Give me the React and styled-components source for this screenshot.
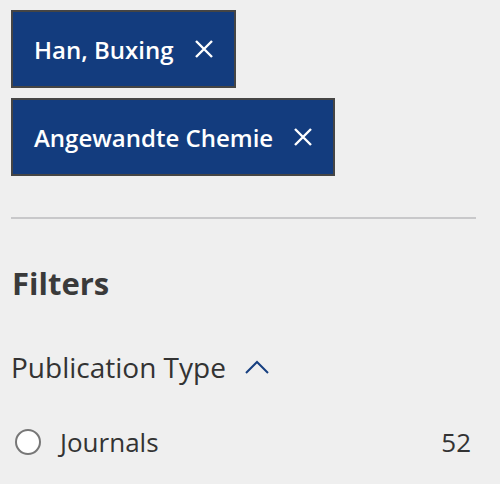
import React from 'react';
import styled, {createGlobalStyle} from "styled-components";

const GlobalStyle = createGlobalStyle`
  html, body {
    margin: 0;
    padding: 0;
    background: #efefef;
    font-family: "Open Sans", "Liberation Sans", sans-serif;
    color: #333;
  }
`

const Page = styled.div`
  width: 500px;
  height: 484px;
  box-sizing: border-box;
  padding: 10px 24px 0 11px;
  overflow: hidden;
`

const ChipList = styled.div`
  display: flex;
  flex-direction: column;
  align-items: flex-start;
  gap: 10px;
`

const Chip = styled.button`
  display: flex;
  align-items: center;
  gap: 20px;
  height: 78px;
  box-sizing: border-box;
  padding: 0 20px 0 21px;
  background: #133c7e;
  border: 2px solid #454545;
  color: #fff;
  font-family: inherit;
  font-size: 24px;
  font-weight: 600;
  cursor: pointer;
`

const Divider = styled.hr`
  margin: 41px 0 0;
  border: none;
  border-top: 2px solid #c8c8ca;
`

const Heading = styled.h2`
  margin: 44px 0 0 1px;
  font-size: 31px;
  font-weight: 700;
  line-height: 40px;
  color: #3a3a3a;
`

const SectionToggle = styled.div`
  display: flex;
  align-items: center;
  gap: 19px;
  margin-top: 45px;
  font-size: 28px;
  line-height: 38px;
  color: #333;
`

const OptionRow = styled.label`
  display: flex;
  align-items: center;
  margin-top: 39px;
  padding: 0 5px 0 4px;
  font-size: 26px;
  line-height: 34px;
  color: #333;
`

const Radio = styled.span`
  width: 26px;
  height: 26px;
  box-sizing: border-box;
  border: 2px solid #777;
  border-radius: 50%;
  background: #fff;
  margin-right: 19px;
`

const Count = styled.span`
  margin-left: auto;
`

const CloseIcon = () => (
    <svg width="20" height="20" viewBox="0 0 20 20" fill="none" stroke="#fff" strokeWidth="2.4">
        <path d="M2 2 L18 18 M18 2 L2 18"/>
    </svg>
)

const ChevronUp = () => (
    <svg width="24" height="14" viewBox="0 0 24 14" fill="none" stroke="#163f80" strokeWidth="2">
        <path d="M1 13 L12 2 L23 13"/>
    </svg>
)

const App = () => {
    const active = ["Han, Buxing", "Angewandte Chemie"]

    return (
        <Page>
            <GlobalStyle/>
            <ChipList>
                {active.map(name =>
                    <Chip key={name}>
                        {name}
                        <CloseIcon/>
                    </Chip>
                )}
            </ChipList>
            <Divider/>
            <Heading>Filters</Heading>
            <SectionToggle>
                Publication Type
                <ChevronUp/>
            </SectionToggle>
            <OptionRow>
                <Radio/>
                Journals
                <Count>52</Count>
            </OptionRow>
        </Page>
    );
};

export default App;
